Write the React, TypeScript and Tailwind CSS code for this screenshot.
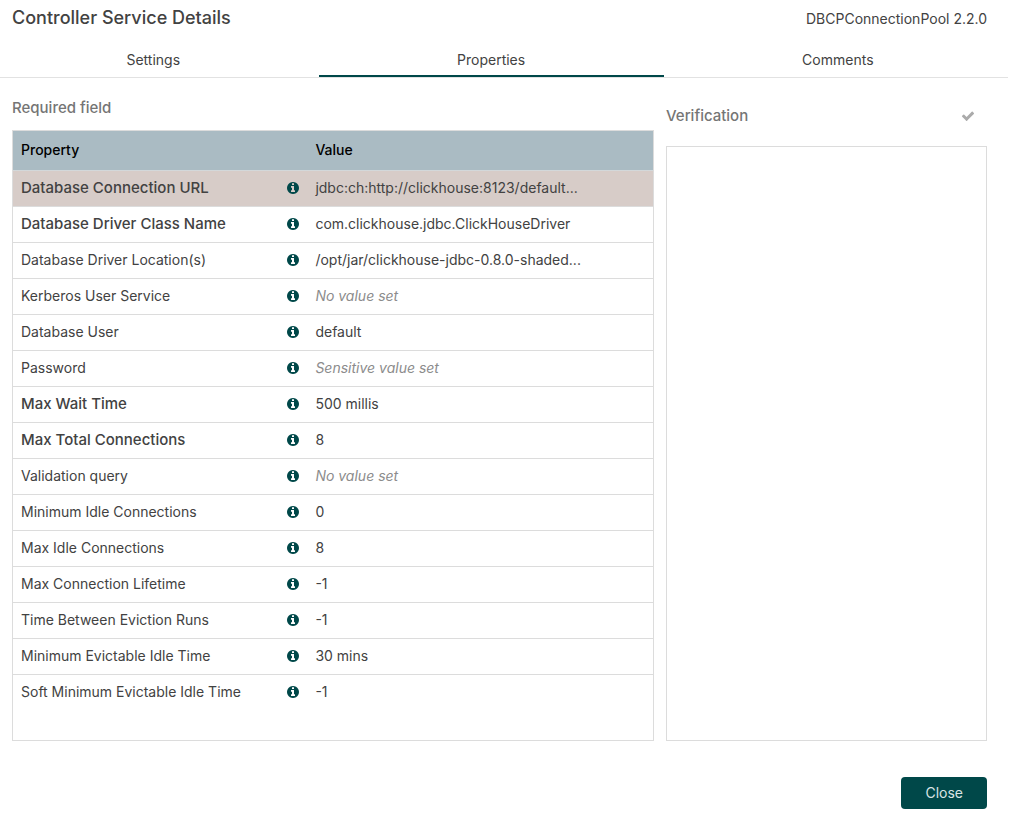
import clsx from 'clsx';

type Property = {
  name: string;
  value: string;
  required?: boolean;
  unset?: boolean;
};

const tabs = ['Settings', 'Properties', 'Comments'];
const activeTab = 'Properties';
const selectedProperty = 'Database Connection URL';

const properties: Property[] = [
  {
    name: 'Database Connection URL',
    value: 'jdbc:ch:http://clickhouse:8123/default...',
    required: true,
  },
  {
    name: 'Database Driver Class Name',
    value: 'com.clickhouse.jdbc.ClickHouseDriver',
    required: true,
  },
  {
    name: 'Database Driver Location(s)',
    value: '/opt/jar/clickhouse-jdbc-0.8.0-shaded...',
  },
  { name: 'Kerberos User Service', value: 'No value set', unset: true },
  { name: 'Database User', value: 'default' },
  { name: 'Password', value: 'Sensitive value set', unset: true },
  { name: 'Max Wait Time', value: '500 millis', required: true },
  { name: 'Max Total Connections', value: '8', required: true },
  { name: 'Validation query', value: 'No value set', unset: true },
  { name: 'Minimum Idle Connections', value: '0' },
  { name: 'Max Idle Connections', value: '8' },
  { name: 'Max Connection Lifetime', value: '-1' },
  { name: 'Time Between Eviction Runs', value: '-1' },
  { name: 'Minimum Evictable Idle Time', value: '30 mins' },
  { name: 'Soft Minimum Evictable Idle Time', value: '-1' },
];

function InfoIcon() {
  return (
    <svg
      viewBox="0 128 1536 1536"
      fill="currentColor"
      aria-hidden="true"
      className="size-3 shrink-0 text-[#004849]"
    >
      <path d="M1024 1376v-160q0-14-9-23t-23-9h-96v-512q0-14-9-23t-23-9h-320q-14 0-23 9t-9 23v160q0 14 9 23t23 9h96v320h-96q-14 0-23 9t-9 23v160q0 14 9 23t23 9h448q14 0 23-9t9-23zm-128-896v-160q0-14-9-23t-23-9h-192q-14 0-23 9t-9 23v160q0 14 9 23t23 9h192q14 0 23-9t9-23zm640 416q0 209-103 385.5t-279.5 279.5-385.5 103-385.5-103-279.5-279.5-103-385.5 103-385.5 279.5-279.5 385.5-103 385.5 103 279.5 279.5 103 385.5z" />
    </svg>
  );
}

function CheckIcon() {
  return (
    <svg
      viewBox="0 0 1792 1792"
      fill="currentColor"
      aria-hidden="true"
      className="size-3.5 text-[#ababab]"
    >
      <path d="M1671 566q0 40-28 68l-724 724-136 136q-28 28-68 28t-68-28l-136-136-362-362q-28-28-28-68t28-68l136-136q28-28 68-28t68 28l294 295 656-657q28-28 68-28t68 28l136 136q28 28 28 68z" />
    </svg>
  );
}

function TabBar() {
  return (
    <div className="overflow-hidden border-b border-[#e2e2e2]">
      <div role="tablist" className="flex -ml-3 -mr-1">
        {tabs.map((tab) => (
          <button
            key={tab}
            type="button"
            role="tab"
            aria-selected={tab === activeTab}
            className={clsx(
              'h-9 flex-auto border-b-2 pt-1',
              tab === activeTab ? 'border-[#004849]' : 'border-transparent'
            )}
          >
            {tab}
          </button>
        ))}
      </div>
    </div>
  );
}

function PropertyTable() {
  return (
    <div className="flex-1 border border-[#dcdcdc]">
      <table className="w-full table-fixed border-collapse text-left">
        <thead>
          <tr className="h-[39px] border-b border-[#d3d8da] bg-[#aabbc3] text-black">
            <th className="w-[46%] px-2 font-medium">Property</th>
            <th className="px-2 font-medium">Value</th>
          </tr>
        </thead>
        <tbody>
          {properties.map((property) => (
            <tr
              key={property.name}
              className={clsx(
                'h-9 border-b border-[#dcdcdc] last:border-b-0',
                property.name === selectedProperty && 'bg-[#d7ccc8]'
              )}
            >
              <td className="px-2">
                <div className="flex items-center justify-between">
                  <span
                    className={clsx(
                      property.required && 'text-[15px] leading-5 font-medium'
                    )}
                  >
                    {property.name}
                  </span>
                  <InfoIcon />
                </div>
              </td>
              <td
                className={clsx(
                  'truncate px-2',
                  property.unset && 'italic text-[#8c8c8c]'
                )}
              >
                {property.value}
              </td>
            </tr>
          ))}
        </tbody>
      </table>
    </div>
  );
}

export default function App() {
  return (
    <main className="flex min-h-screen flex-col bg-white pr-1.5 font-['Inter',sans-serif] text-sm text-[#424242]">
      <header className="flex items-baseline justify-between pl-3 pr-[21px] pt-1">
        <h1 className="text-lg leading-7 font-medium">
          Controller Service Details
        </h1>
        <span>DBCPConnectionPool 2.2.0</span>
      </header>

      <div className="pt-[9px]">
        <TabBar />
      </div>

      <div className="grid flex-1 grid-cols-[2fr_1fr] gap-3 pl-3 pr-[21px] pt-5">
        <section className="flex min-w-0 flex-col">
          <h2 className="pb-3 text-[15px] leading-5 font-medium text-[#757575]">
            Required field
          </h2>
          <PropertyTable />
        </section>

        <section className="flex min-w-0 flex-col">
          <div className="flex items-center justify-between pb-5 pr-3 pt-2">
            <h2 className="text-[15px] leading-5 font-medium text-[#757575]">
              Verification
            </h2>
            <button type="button" aria-label="Verify properties" disabled>
              <CheckIcon />
            </button>
          </div>
          <div className="flex-1 border border-[#dcdcdc]" />
        </section>
      </div>

      <footer className="flex justify-end pb-2 pr-[21px] pt-9">
        <button
          type="button"
          className="h-8 rounded bg-[#004849] px-6 text-[#d9e4e4]"
        >
          Close
        </button>
      </footer>
    </main>
  );
}
